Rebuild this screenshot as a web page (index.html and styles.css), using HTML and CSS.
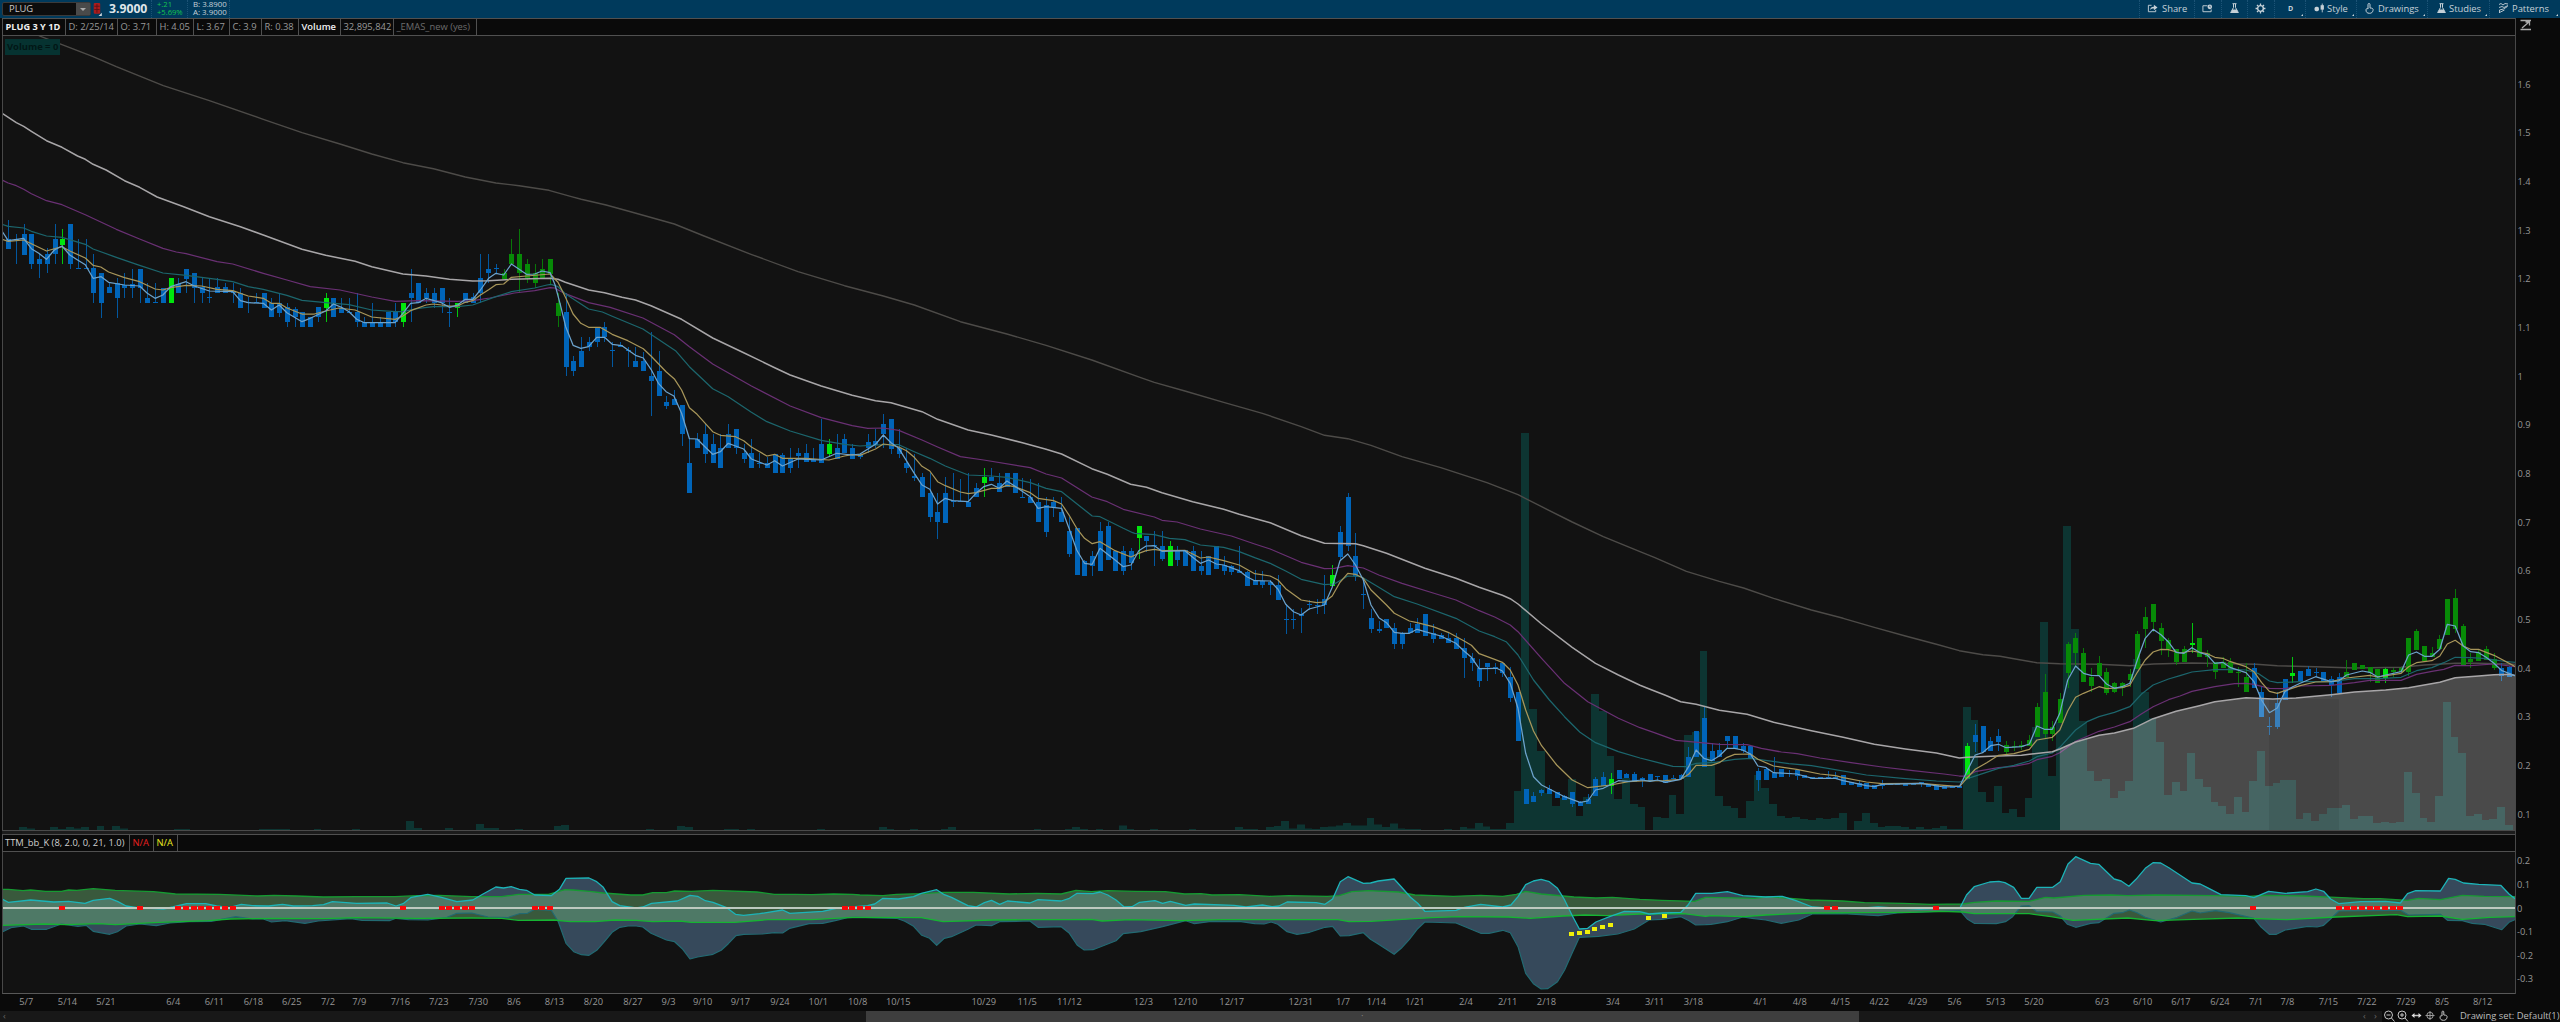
FILE: index.html
```html
<!DOCTYPE html>
<html lang="en">
<head>
<meta charset="utf-8">
<title>PLUG 3 Y 1D</title>
<link rel="stylesheet" href="styles.css">
</head>
<body>
<div class="app">
  <header class="topbar">
    <div class="symbol"><span>PLUG</span><i class="drop"></i></div>
    <svg class="link-icon" viewBox="0 0 8 12"><rect x="0.5" y="0" width="6" height="10" rx="1" fill="#a81c1c"/><path d="M1 3h5M1 6h5M3.5 1v8" stroke="#5a1016" stroke-width=".8"/><path d="M8 9v3H5z" fill="#cfd8de"/></svg>
    <strong class="last">3.9000</strong>
    <div class="pair change"><span>+.21</span><span>+5.69%</span></div>
    <div class="pair quote"><span>B: 3.8900</span><span>A: 3.9000</span></div>
    <nav class="tools">
      <button class="tool share"><svg viewBox="0 0 12 10"><path d="M5 1.5H1.500v7h8V6.500" fill="none" stroke="currentColor"/><path d="M3.500 6.500C3.500 4 5 3 7.500 3V1L11.500 4 7.500 7V5C5.500 5 4.500 5.500 3.500 6.500z" fill="currentColor"/></svg>Share</button>
      <button class="tool snap"><svg viewBox="0 0 12 10"><path d="M6 2H1v6.500h9V6" fill="none" stroke="currentColor"/><circle cx="8.500" cy="3.200" r="2.500" fill="currentColor"/><path d="M8.500 1.900v1.500h1" stroke="#003a5c" stroke-width=".7" fill="none"/></svg></button>
      <button class="tool flask"><svg viewBox="0 0 10 11"><path d="M3 .7h4M4 1v3.500L1.200 9.500h7.600L6 4.500V1" fill="none" stroke="currentColor"/><path d="M3 6.500h4l2 3.500H1z" fill="currentColor"/></svg></button>
      <button class="tool gear"><svg viewBox="0 0 10 10"><circle cx="5" cy="5" r="2.600" fill="none" stroke="currentColor" stroke-width="1.300"/><path d="M5 .5v1.500M5 8v1.500M.5 5H2M8 5h1.500M1.800 1.800l1 1M7.200 7.200l1 1M8.200 1.800l-1 1M2.800 7.200l-1 1" stroke="currentColor" stroke-width="1.200"/></svg></button>
      <button class="tool period more">D</button>
      <button class="tool style more"><svg viewBox="0 0 10 10"><rect x="0.500" y="3.500" width="4" height="4" rx="1.500" fill="currentColor"/><path d="M7.500.5v8" stroke="currentColor" stroke-width=".8"/><rect x="6" y="2" width="3" height="4" fill="currentColor"/></svg>Style</button>
      <button class="tool draw more"><svg viewBox="0 0 10 11"><path d="M3.500 6V1.500a1 1 0 0 1 2 0V5c2.500 0 3.500.8 3 2.500C8 9.500 7 10.300 5 10.300 2.500 10.300 1.500 9 1.500 7c0-1.300 1-2 2-1" fill="none" stroke="currentColor"/></svg>Drawings</button>
      <button class="tool studies more"><svg viewBox="0 0 10 11"><path d="M3 .7h4M4 1v3.500L1.200 9.500h7.600L6 4.500V1" fill="none" stroke="currentColor"/><path d="M3 6.500h4l2 3.500H1z" fill="currentColor"/></svg>Studies</button>
      <button class="tool patterns more"><svg viewBox="0 0 11 11"><path d="M1 1.500l2-1 2 1.500 2-1.500 3 .500M1 4.500l3-1 2 1 4-2M1.500 10V7l4-1 4-2.500M1.500 9.500l5-2.500" fill="none" stroke="currentColor" stroke-width=".9"/></svg>Patterns</button>
    </nav>
  </header>

  <main class="workspace">
    <section class="charts">
      <div class="info">
        <b class="c1">PLUG 3 Y 1D</b><span class="c2">D: 2/25/14</span><span class="c3">O: 3.71</span><span class="c4">H: 4.05</span><span class="c5">L: 3.67</span><span class="c6">C: 3.9</span><span class="c7">R: 0.38</span><em class="c8">Volume</em><span class="c9">32,895,842</span><span class="c10">_EMAS_new (yes)</span>
      </div>
      <div class="plot">
        <svg id="price" viewBox="3 36 2512 794" preserveAspectRatio="none"></svg>
        <span class="badge">Volume = 0</span>
      </div>
      <div class="splitter"></div>
      <div class="info study">
        <span class="name">TTM_bb_K (8, 2.0, 0, 21, 1.0)</span><span class="red">N/A</span><span class="yellow">N/A</span>
      </div>
      <div class="plot lower">
        <svg id="squeeze" viewBox="3 852 2512 141" preserveAspectRatio="none"></svg>
      </div>
    </section>
    <aside class="axis">
      <svg id="scale" viewBox="2516 18 44 976"></svg>
    </aside>
  </main>

  <svg id="dates" class="dates" viewBox="0 994 2560 16"></svg>

  <footer class="bottom">
    <div class="track"><span class="arrow">‹</span><div class="thumb">·</div><span class="arrow">‹</span><span class="arrow">›</span></div>
    <svg class="zoomers" viewBox="0 0 70 12">
      <g fill="none" stroke="#c4c4c4">
        <circle cx="6.500" cy="5" r="4"/><path d="M9.500 8l3 3.500M4.500 5h4"/>
        <circle cx="20" cy="5" r="4"/><path d="M23 8l3 3.500M18 5h4M20 3v4"/>
        <path d="M31 5.500h7" stroke-width="1.500"/><path d="M29.500 5.500l3-2.500v5zM39.500 5.500l-3-2.500v5z" fill="#ddd" stroke="none"/>
        <g stroke="#9a9a9a"><circle cx="48" cy="5.500" r="3.200"/><path d="M48 1v9M43.500 5.500h9"/></g>
        <path d="M60 6V2a.9.900 0 0 1 1.800 0v3c2.500 0 3.700.8 3.200 2.500-.5 2-1.500 2.800-3.500 2.800-2.500 0-3.500-1.300-3.500-3.300 0-1 1-1.500 2-1"/>
      </g>
    </svg>
    <span class="set">Drawing set: Default(1)</span>
  </footer>
</div>
<script src="chart.js"></script>
</body>
</html>
```
FILE: styles.css
```css
* { box-sizing: border-box; }
html, body { margin: 0; height: 100%; background: #0a0a0a; overflow: hidden; }
body { font: 9.400px/1 "Open Sans", "Noto Sans", sans-serif; color: #999; }
.app { display: flex; flex-direction: column; width: 2560px; height: 1022px; }

.topbar { display: flex; height: 18px; background: #003a5c; align-items: stretch; color: #c6d1d8; }
.symbol { display: flex; align-items: center; justify-content: space-between; width: 89px; height: 14px; margin: 2px 2px 0 2px; padding-left: 6px; background: #0d0d0d; border: 1px solid #3a3a3a; border-radius: 2px; color: #c9c9c9; }
.drop { display: grid; place-items: center; width: 14px; height: 12px; background: #4a4a4a; }
.drop::after { content: ""; border: 3px solid transparent; border-top: 3px solid #aaa; border-bottom: 0; }
.link-icon { width: 9px; height: 13px; margin-top: 3px; }
.last { width: 50px; padding-left: 7px; font-size: 12.200px; line-height: 18px; color: #dfe5e9; border-right: 1px dotted #1c5376; }
.pair { display: flex; flex-direction: column; padding-top: 1px; font-size: 7.900px; line-height: 7.500px; border-right: 1px dotted #1c5376; }
.change { width: 36px; padding-left: 5px; color: #14c44e; font-size: 7.600px; }
.quote { width: 42px; padding-left: 5px; }
.tools { display: flex; margin-left: auto; width: 421px; }
.tool { position: relative; display: flex; align-items: center; gap: 4px; margin: 0; padding: 0 0 1px 7px; border: 0; border-left: 1px dotted #1c5376; background: none; font: inherit; color: #c6d1d8; }
.tool svg { width: 11px; height: 11px; flex: none; }
.tool.more::after { content: ""; position: absolute; right: 2px; bottom: 2px; border: 1.500px solid transparent; border-right-color: #cfd8de; border-bottom-color: #cfd8de; }
.share { width: 55px; }
.snap { width: 27px; }
.flask { width: 26px; }
.gear { width: 27px; }
.period { width: 31px; padding-left: 13px; font-size: 7px; font-weight: 700; }
.style { width: 51px; padding-left: 8px; gap: 2px; }
.draw { width: 71px; padding-left: 7px; gap: 3px; }
.studies { width: 62px; padding-left: 8px; gap: 2px; }
.patterns { width: 71px; padding-left: 8px; gap: 3px; }

.workspace { display: flex; height: 976px; }
.charts { display: flex; flex-direction: column; width: 2516px; padding-left: 2px; border-right: 1px solid #484848; }
.info { display: flex; height: 18px; background: #0a0a0a; border: solid #505050; border-width: 1px 0 1px 1px; line-height: 15px; white-space: nowrap; }
.info > * { border-right: 1px solid #505050; padding-left: 2.500px; font-style: normal; }
.info b, .info em { color: #f0f0f0; }
.info b { font-size: 9.200px; }
.c1 { width: 63px; }
.c2 { width: 52px; }
.c3 { width: 39px; }
.c4 { width: 37px; }
.c5 { width: 36px; }
.c6 { width: 32px; }
.c7 { width: 37px; }
.c8 { width: 42px; font-weight: 600; }
.c9 { width: 53px; }
.c10 { width: 83px; color: #6c6c6c; }
.plot { position: relative; height: 794px; border-left: 1px solid #484848; background: #121212; }
.plot svg { display: block; width: 100%; height: 100%; }
.badge { position: absolute; left: 2px; top: 3px; width: 55px; height: 16px; background: #063331; color: #021716; font-weight: 700; line-height: 15px; padding-left: 2px; white-space: nowrap; }
.splitter { height: 4px; background: #1c1c1c; border-top: 1px solid #4a4a4a; }
.study .name { width: 127px; padding-left: 2px; color: #d0d0d0; }
.study .red { width: 24px; color: #e82020; }
.study .yellow { width: 24px; color: #ecec20; }
.lower { height: 142px; border-bottom: 1px solid #585858; }
.axis { width: 44px; background: #0a0a0a; }
.axis svg { display: block; width: 44px; height: 976px; }
svg text { font: 9.300px "Open Sans", "Noto Sans", sans-serif; fill: #969696; }
.dates { display: block; width: 2560px; height: 16px; }

.bottom { display: flex; height: 12px; background: #0a0a0a; align-items: center; }
.track { display: flex; align-items: center; width: 2382px; height: 11px; background: #181818; color: #666; }
.arrow { width: 11px; padding-left: 3px; }
.arrow:first-child { width: 866px; }
.thumb { width: 994px; height: 11px; background: #3e3e3e; text-align: center; color: #888; margin-right: 501px; line-height: 10px; }
.zoomers { width: 70px; height: 12px; }
.set { margin-left: 8px; color: #bcbcbc; white-space: nowrap; }

.volume { fill: #0d3532; }
.cloud { fill: #fff; fill-opacity: .24; }
.line { fill: none; stroke-linejoin: round; stroke-width: 1.250; }
.ema200 { stroke: #4d4b48; stroke-width: 1.400; }
.ema55 { stroke: #a8a6a8; stroke-width: 1.500; }
.ema34 { stroke: #6a3074; }
.ema21 { stroke: #1c666d; }
.ema8 { stroke: #a8965a; }
.ema3 { stroke: #6da3cc; }
.blue { fill: #0064b8; }
.green { fill: #078a07; }
.lime { fill: #00e60d; }
```
FILE: chart.js
```js
const NS = 'http://www.w3.org/2000/svg';
const add = (parent, tag, attrs, text) => {
  const el = document.createElementNS(NS, tag);
  for (const k in attrs) el.setAttribute(k, attrs[k]);
  if (text !== undefined) el.textContent = text;
  parent.appendChild(el);
  return el;
};

// Each bar takes 7.743px; vertical values are thirds of a pixel below the strip's top.
const STEP = 7.743, START = 8.6, BASE = 830;
const barX = n => START + STEP * n;
const strips = {
  a: [0, 30, 2.45], b: [500, 200, 2.45], c: [1000, 350, 2.45], d: [1440, 420, 2.8], e: [1940, 500, 2.529],
  p: [0, 825, 1.8233], q: [850, 825, 1.8233], r: [1700, 825, 1.8233]
};
const points = parts => Object.entries(parts).flatMap(([key, list]) => {
  const [ox, oy, sx] = strips[key];
  return list.trim().split(/\s+/).map(p => {
    const [x, y] = p.split(',').map(Number);
    return [+(ox + x / sx).toFixed(1), +(oy + y / 3).toFixed(1)];
  });
});

// Bars: high,bodyTop,bodyBottom,low,colour (two values: body only, three: no lower wick).
const bars = [
  ['a', 0, `570,627,658 612,628,630,702 582,612,675 612,612,702,718 672,686,702,745 655,672,702,730 582,628,672,702 598,627,644,702,L 582,582,702,718 628,715,718 628,715,718
  672,715,790,820 730,730,820,864 760,772,788 745,758,804,864 730,765,773,804 718,762,773,804 716,716,773,820 760,804,818 760,817,820 775,820 745,745,820,820,L 745,762,788 716,716,746,788 730,730,773,820 745,772,788,820 745,802,805,820
  745,772,788 760,772,788 760,785,788,820 773,788,833 802,815,819,850 788,816,819 788,833 804,818,862 788,820,848,862 818,832,876,892 832,836,862,892 846,892 860,892 830,830,862,876 788,803,833,876,L 803,862 803,833,848 803,845,848 788,846,876,892
  860,876,892 820,876,892 860,876,892 846,892 818,846,876,892 818,818,876,892,L 716,788,804,876 760,818 773,788,804,820 773,788,818,833 773,773,820,850 804,845,848,892 820,820,833,862,L 788,818 788,800,818 672,745,788,820 672,716,730,760 702,714,717,730
  716,730,747,747,G 628,672,702,702,G 598,672,730,788,G 686,702,745,760,G 702,730,760,773,G 686,716,745,745,G 686,686,733,762,G 788,818,857,892,G 788,846,1010,1038 978,992,1022,1038 920,962,1010 920,935,950,962 890,890,935,950 875,892,920,935 935,961,964,1010 935,945,950 950,961,964,1010`],
  ['b', 81, `440,483,500 455,483,513 395,527,544,647 452,512,587 587,605,618,628 570,598,614 614,614,702,738 716,788,880 700,717,745 672,702,762,790 702,732,788 702,745,804 672,702,745 688,688,745,762 732,760,777,790 716,760,804 760,788,791,804 770,790,804 762,820 760,765,820
  745,777,804,818 745,760,768,804 732,760,785 745,780,785 657,732,788 717,732,762,772,L 702,745,777 702,717,760 732,745,777 760,763,770,777 702,727,745,758 688,724,735,745 642,672,702,745 658,658,747,762 688,745,762,773 745,788,804,820 762,827,833,843 820,832,892 820,878,952,966
  878,935,965,1016 832,878,968 820,903,906,920 838,904,907 820,905,922 850,863,892 803,832,850,892,L 803,832,843 818,850,877 820,860 820,880 835,891,894 838,892,908 848,905,967 892,915,995,1010 892,905,922,952 892,935,967 950,993,1062,1072 985,1125 1080,1084,1127 1052,1068,1098,1127
  965,993,1113 965,978,1080 1052,1112 1037,1052,1112,1125 1045,1053,1090,1110`],
  ['c', 146, `528,528,563,628,L 558,558,573,605 542,586,589,647 543,588,627,632 573,588,648,648,L 588,600,630,648 600,648 588,602,663 602,648,663,675 617,675 588,588,657 617,645,663,675 645,648,665,675 588,662,670 663,665,708 660,690,705 662,692,705,713 690,697,705,735 675,705,750
  762,806,809,853 778,806,809,838 775,792,798,848 750,763,766,780 748,764,767,792 675,748,765,792 645,675,708,708,L 528,545,620,632 428,440,588,603 550,617,677,692 685,732,735,778 778,804,838,848 813,837,843,848 807,833 820,835,882,897 845,850,882,897 820,835,848 805,822,850 792,858
  822,850,867,880 850,855,867 850,865,880 850,865,897 865,895,925,983 908,923,940,962 928,955,993,1010 938,938,950,993 938,950,955,973 938,938,970,982 950,982,1043,1055 1026,1173 1318,1363 1325,1337,1355 1318,1320,1328,1337 1305,1317,1333 1325,1343 1335,1338,1350 1325,1325,1363,1370
  1352,1355,1367 1333,1348,1363 1280,1288,1338 1265,1280,1308 1268,1288,1308,1333,L 1260,1288 1270,1273,1283 1265,1272,1297`],
  ['d', 211, `1072,1073,1080,1102 1063,1083 1068,1068,1072,1083 1065,1088 1065,1073,1078 1063,1065,1078 980,1010,1070 933,1010 858,895,1042 970,993,1023 970,990,1010 948,948,962,988 948,988 970,977,992,1000 975,978,1015 1045,1052,1080,1112 1040,1046,1080 1012,1058,1073 1048,1070
  1050,1058,1063,1070 1050,1050,1067,1080 1065,1075 1070,1078 1072,1077 1052,1070,1077 1055,1070,1077 1065,1095 1085,1095 1080,1088,1100 1090,1108 1095,1106 1080,1093,1098,1106 1088,1095 1090,1095 1090,1097 1088,1095 1085,1085,1093,1100 1092,1100 1095,1110 1098,1106 1099,1103 1098,1103`],
  ['e', 253, `730,738,836,836,L 672,705,725,755 678,755 710,722,752 688,707,725,752 722,735,755,768,G 722,738,742,752,G 722,736,740,750,G 705,720,738,738,G 610,622,710,710,G 522,575,702,715,G 663,680,703,722,G 580,598,668,668,G 425,431,520,565,G 400,415,458,500,G 445,458,545,545,G 505,532,557,577,G
  467,490,527,527,G 505,517,578,585,G 545,550,577,578,G 545,550,565,587,G 508,522,540,560,G 393,402,507,507,G 320,350,388,445,G 312,312,365,395,G 370,385,423,465,G 415,420,447,470,G 448,448,487,495,G 437,447,487,487,G 370,430,435,458,L 415,415,470,470,G 450,460,472,500,G 487,487,515,537,G
  470,485,503,503,G 475,487,518,518,G 500,515,518,562,G 490,532,575,575,G 490,503,563 560,577,650 652,679,682,706 577,608,681,688 538,600 472,518,528,548,L 514,543 497,507,528 503,517,520,530 517,545 528,538,556,590 520,530,578 480,517,530,530,G 490,490,510,510,G 495,495,508,508,G 500,500,520,545,G
  507,507,548,548,G 503,507,535,548,L 505,510,515,530,G 500,505,515,515,G 415,415,515,528,G 387,393,450,450,G 437,437,482,482,G 440,460,470,470,G 405,418,447,447,G 298,298,405,405,G 268,293,387,400,G 373,378,497,497,G 460,478,485,503,G 450,455,483,483,G 437,447,480,480,G 460,478,503,510,G 490,503,527,543 497,500,532`]
];

// Volume heights in pixels by bar number, then tall stretches as strip values.
const quiet = {2:3,3:1.500,6:3,7:1,8:3,9:1.500,10:3,12:4,14:4,15:1.500,22:1,23:1,33:1,34:1,35:1,36:1,40:1,45:1,52:9,53:2,57:2,61:6,62:2,63:2,66:1,71:4,72:5,83:1,87:4,88:3,93:1,94:1,96:1,105:1,
  113:3,114:1,117:1,121:1,122:3,133:1,137:1,138:3,139:1,141:1,144:4.500,145:1,148:1,153:1,159:3,160:1,161:1,163:3,164:4,165:9,166:1.500,167:5.500,168:1.500,169:1,170:3,171:3.500,172:4.500,173:7,174:4.500,175:4.500,176:12,177:5.500,178:3,179:6.500,180:1.500,181:1,182:1,
  186:1,188:3,189:1.500,190:7,191:3.500,192:1,193:1,194:7};
const busyD = `1113 39 867 993 1120 1157 1135 1078 1187 1130 821 872 1008 1136 1075 1152 1160 1231 1191 1195 1124 1183 944 935 692 1012 1127 1157 1164 1195 1143 1065 1103 1152 1189 1194 1191 1197 1200 1193 1197 1193 1180 1231 1203 1180 1209 1220 1218 1218 1221 1226 1221 1226 1223 1219 1226 1226`;
const busyE = `622 660 876 907 857 940 927 950 894 680 366 827 667 79 388 663 812 843 838 893 873 843 478 577 655 727 885 845 873 760 838 862 906 917 942 891 937 843 753 858 850 841 841 958 940 962 943 924 925 915 958 948 947 970 965 968 966 817 880 953 965 888 606 712 758 948 943 960 957 922 975`;

const ema200 = {
  a: '95,17 152,44 228,80 285,110 400,167 513,212 645,268 740,308 833,342 911,372 987,398 1062,416 1140,441 1215,459 1272,467 1345,481 1400,500 1424,508',
  b: '260,15 320,35 427,72 500,108 615,163 730,215 844,257 939,288 1015,315 1128,365 1242,402 1338,436 1450,480 1568,532',
  c: '378,97 453,123 548,157 643,190 738,230 795,256 852,266 909,286 985,320 1080,353 1193,398 1269,434 1327,470 1402,516 1478,560 1568,605',
  d: '600,412 690,454 782,484 850,504 934,535 1040,570 1129,595 1216,622 1303,648 1390,673 1454,692 1520,704',
  e: '152,469 187,476 245,488 303,491 402,493 480,497 540,492 637,489 735,491 800,493 853,497 950,500 1048,504 1166,502 1225,495 1303,490 1360,490 1455,493'
};
const ema55Tail = '303,747 343,726 402,706 441,699 489,685 539,656 597,634 656,617 695,605 774,593 842,597 900,594 989,584 1048,576 1127,570 1185,563 1264,547 1303,533 1362,528 1401,524 1440,523 1456,527';
const ema55 = {
  a: '5,250 40,278 58,289 77,304 114,332 152,352 190,378 209,388 228,403 260,420 305,452 342,472 385,501 450,530 513,560 589,590 645,615 740,658 798,676 870,694 911,710 987,732 1044,738 1101,748 1158,753 1197,752 1253,748 1348,745',
  b: '142,238 160,247 217,270 256,278 299,292 332,300 370,317 445,358 521,414 597,458 673,503 711,525 787,558 863,586 920,602 958,608 1034,635 1072,658 1147,690 1204,705 1280,728 1338,748 1376,762 1450,806 1488,823',
  c: '320,403 359,412 397,428 472,455 548,478 586,493 662,518 738,557 795,580 871,581 890,587 947,610 1041,655 1117,685 1174,712 1231,736 1250,746 1269,762 1327,822 1402,892 1459,940 1515,975 1568,1006',
  d: '588,808 631,826 674,845 717,853 782,871 860,883 934,907 1040,932 1129,952 1216,973 1303,987 1390,999 1454,1014',
  e: '69,772 128,769 206,766 226,763 284,755 ' + ema55Tail
};
const ema34 = {
  a: '5,450 20,459 40,467 58,478 77,491 114,512 152,524 209,554 285,598 342,627 399,655 432,666 456,671 532,695 570,702 645,730 703,750 760,770 833,780 911,801 968,814 1025,812 1121,814 1158,812 1200,804 1260,789 1310,782 1348,773 1360,774',
  b: '138,267 160,281 217,308 270,322 350,354 427,404 464,440 521,492 616,558 711,618 787,653 863,677 901,685 939,684 977,691 1034,720 1072,741 1128,770 1185,780 1299,803 1338,822 1376,834 1450,891 1488,905 1527,928',
  c: '378,501 397,511 434,516 491,537 567,558 624,582 662,597 738,637 795,656 819,655 852,647 890,654 928,675 985,700 1061,729 1117,750 1174,782 1212,801 1250,825 1269,845 1327,925 1383,1000 1440,1055 1515,1105 1568,1133',
  d: '600,938 660,961 700,965 782,973 860,974 900,985 956,996 1000,1001 1064,1014 1151,1028 1238,1041 1324,1052 1411,1062 1454,1068',
  e: '50,828 69,828 89,815 148,803 187,799 226,790 245,779 284,769 303,758 343,724 402,694 441,681 480,665 509,642 539,620 578,599 607,588 637,574 695,560 745,551 774,550 794,553 833,565 872,566 911,558 989,556 1048,548 1087,541 1166,541 1205,523 1244,514 1274,508 1303,496 1342,497 1400,492 1455,500'
};
const ema21 = {
  a: '5,583 20,589 58,594 77,604 114,618 152,622 209,643 228,657 285,682 342,706 399,729 456,736 532,748 570,755 608,770 645,778 703,796 740,811 798,818 855,824 911,840 968,845 987,845 1025,835 1062,830 1121,830 1158,825 1215,800 1253,785 1310,774 1340,765',
  b: '125,253 142,260 160,281 217,327 251,336 275,349 350,387 430,452 464,500 521,566 559,590 616,637 654,665 711,693 787,721 844,733 882,738 939,734 977,734 1015,755 1053,775 1091,798 1147,825 1204,828 1242,832 1299,848 1338,865 1376,875 1451,948 1470,950 1527,985 1550,998',
  c: '330,550 378,554 415,565 453,569 491,585 548,592 586,605 624,623 662,640 700,663 738,688 795,704 819,702 852,678 885,680 928,712 966,740 1022,762 1117,805 1174,843 1212,860 1240,875 1269,915 1307,990 1346,1050 1383,1100 1421,1147 1459,1178 1515,1205 1568,1224',
  d: '600,1025 652,1039 687,1040 717,1030 770,1027 825,1018 869,1015 911,1021 977,1031 1040,1037 1086,1045 1194,1065 1303,1076 1390,1083 1454,1086',
  e: '60,842 79,832 148,805 187,796 226,783 245,770 284,759 303,742 343,690 372,665 402,650 441,637 480,620 509,583 539,555 578,537 607,527 637,516 695,509 735,508 774,510 804,520 833,543 853,548 911,545 989,545 1048,536 1107,536 1166,532 1205,512 1244,503 1274,488 1303,472 1342,473 1381,476 1421,483 1455,487'
};
const ema8 = {
  a: '5,628 20,634 58,630 77,641 114,663 152,650 171,663 209,684 228,706 247,711 266,726 305,743 342,755 380,777 399,780 418,773 456,766 494,768 532,778 570,782 608,798 645,805 665,820 684,820 703,834 740,852 770,852 798,843 830,834 870,840 911,861 968,868 987,858 1006,842 1044,825 1062,822 1101,828 1121,828 1140,817 1158,812 1177,795 1197,779 1215,764 1234,762 1253,742 1290,738 1348,732 1367,757 1386,803 1404,852 1423,880 1442,892 1470,892',
  b: '256,389 275,403 313,422 351,446 370,468 407,515 428,538 445,570 464,623 483,643 521,695 540,706 577,710 597,722 616,741 654,768 673,763 692,775 749,775 806,780 844,768 863,764 882,766 920,747 939,732 958,735 977,741 996,752 1015,772 1034,799 1053,813 1072,845 1091,857 1128,876 1147,881 1166,878 1204,865 1223,865 1242,856 1261,860 1299,878 1318,895 1356,902 1376,912 1394,945 1413,985 1432,1015 1451,1031 1470,1025 1507,1052 1546,1071',
  c: '340,610 358,602 378,598 397,602 453,601 472,612 491,624 511,621 548,632 586,645 624,671 662,678 681,690 700,716 738,750 776,758 795,756 814,738 833,697 852,670 871,673 890,685 909,720 947,765 966,790 1003,813 1022,818 1061,830 1098,847 1136,872 1155,886 1174,911 1212,928 1231,937 1250,960 1269,1005 1288,1080 1307,1143 1327,1187 1364,1245 1402,1290 1440,1313 1496,1305 1540,1295',
  d: '566,1083 630,1082 674,1078 696,1063 717,1036 760,1036 782,1028 804,1012 825,1003 869,1002 890,1018 934,1038 999,1048 1064,1062 1107,1067 1129,1073 1194,1086 1238,1091 1346,1090 1411,1096 1440,1098',
  e: '50,859 69,833 89,808 118,788 148,766 187,761 226,748 245,720 284,712 303,690 323,633 343,592 363,580 402,560 421,566 460,563 480,556 499,517 519,480 539,456 559,448 578,449 607,459 637,453 676,461 695,472 715,475 735,485 774,500 794,515 813,547 833,574 853,580 872,572 911,557 950,546 989,545 1028,534 1087,526 1107,531 1166,520 1185,500 1205,488 1244,482 1264,468 1283,432 1303,421 1323,438 1342,448 1362,448 1401,466 1455,500'
};
const ema3 = {
  a: '5,603 20,632 58,625 77,656 95,670 114,688 133,660 152,648 171,675 190,690 209,704 228,745 248,740 266,757 305,765 342,768 361,790 380,805 399,795 418,770 456,755 476,768 513,783 570,785 589,812 608,818 645,820 665,840 684,825 703,848 740,875 760,865 798,843 817,822 837,832 855,845 874,868 893,878 968,878 987,850 1006,820 1025,818 1044,805 1081,818 1101,832 1121,825 1140,808 1158,808 1177,780 1197,745 1215,730 1234,735 1253,702 1290,733 1310,732 1328,723 1348,728 1360,765 1372,820 1386,890 1404,946 1423,955 1442,950 1462,922',
  b: '256,412 275,433 299,437 332,466 351,474 370,508 388,550 407,575 426,588 445,640 464,716 483,717 502,740 521,763 540,755 559,730 577,738 597,747 616,777 654,795 673,782 692,798 730,777 749,778 787,780 825,760 863,765 882,762 920,733 939,705 958,728 977,745 1015,820 1034,855 1053,868 1072,912 1091,895 1109,902 1147,905 1166,880 1185,860 1204,853 1223,865 1242,843 1261,858 1299,890 1318,925 1338,920 1376,925 1394,985 1413,1050 1432,1090 1451,1093 1470,1045 1488,1062 1507,1080 1527,1100 1546,1095',
  c: '340,602 358,588 378,587 397,604 453,602 472,622 491,640 511,630 530,642 548,645 586,662 605,680 624,692 662,693 681,718 700,763 719,785 738,795 757,777 795,765 814,712 833,632 852,612 871,645 890,690 909,765 928,803 947,818 966,847 985,850 1003,850 1022,838 1041,845 1080,858 1117,880 1136,902 1155,922 1174,956 1217,955 1231,963 1250,1000 1269,1075 1288,1210 1307,1280 1327,1305 1383,1340 1421,1357 1440,1353 1459,1320 1478,1315 1515,1292 1540,1294',
  d: '566,1080 588,1084 609,1080 631,1087 674,1078 696,1040 717,990 739,1015 760,1022 782,1008 804,985 825,985 847,990 869,1002 890,1038 911,1042 934,1058 999,1062 1043,1075 1107,1075 1129,1082 1194,1097 1216,1100 1238,1093 1346,1090 1411,1101 1440,1100',
  e: '50,858 69,812 89,765 108,758 128,737 148,733 167,743 206,740 226,732 245,678 264,688 284,688 303,640 323,540 343,498 363,520 382,526 402,527 421,552 441,565 460,560 480,550 499,480 519,415 539,388 559,404 577,425 597,457 617,460 637,443 656,457 676,465 695,490 715,487 735,503 774,518 794,545 813,600 833,638 853,624 872,575 892,560 911,550 950,530 989,545 1008,543 1028,525 1068,513 1087,517 1107,531 1127,525 1166,515 1185,465 1205,456 1225,469 1244,469 1264,448 1283,373 1303,378 1323,437 1342,455 1362,458 1381,472 1401,490 1421,512 1455,527'
};

const price = document.getElementById('price');

// Volume histogram
const volume = (n, top) => {
  const left = barX(n) - STEP / 2 - 0.9, x = Math.round(left), x2 = Math.round(left + STEP);
  if (top < BASE) add(price, 'rect', {class: 'volume', x, y: top, width: x2 - x, height: BASE - top});
};
for (const n in quiet) volume(+n, BASE - quiet[n]);
busyD.split(' ').forEach((v, i) => volume(195 + i, Math.round(420 + v / 3)));
busyE.split(' ').forEach((v, i) => volume(253 + i, Math.round(500 + v / 3)));

const line = (svg, cls, parts) => add(svg, 'polyline', {class: 'line ' + cls, points: points(parts).join(' ')});
line(price, 'ema200', ema200);

// Candles
const tint = {L: 'lime', G: 'green'};
for (const [key, first, rows] of bars) {
  const oy = strips[key][1];
  rows.trim().split(/\s+/).forEach((row, i) => {
    const f = row.split(',');
    let v = f.filter(s => !isNaN(s)).map(Number);
    if (v.length === 2) v = [v[0], v[0], v[1], v[1]];
    if (v.length === 3) v.push(v[2]);
    const [h, t, b, l] = v.map(s => Math.round(oy + s / 3));
    const cls = tint[f[4]] || 'blue', x = Math.round(barX(first + i) - 0.5);
    add(price, 'rect', {class: cls, x, y: h, width: 1, height: Math.max(l - h, 1), opacity: .85});
    add(price, 'rect', {class: cls, x: x - 2, y: t, width: 5, height: Math.max(b - t, 1)});
  });
}

line(price, 'ema34', ema34);
line(price, 'ema21', ema21);
const cloudEdge = points({e: ema55Tail});
add(price, 'polygon', {class: 'cloud', points: cloudEdge.join(' ') + ` 2515,${BASE} 2060,${BASE}`});
add(price, 'rect', {x: 2269, y: 699, width: 70, height: 131, fill: '#000', opacity: .08});
line(price, 'ema55', ema55);
line(price, 'ema8', ema8);
line(price, 'ema3', ema3);

// Squeeze study
const upperK = {
  p: '5,193 15,193 42,197 56,195 83,199 112,199 125,195 140,196 170,191 210,196 280,200 320,207 400,208 470,213 500,211 540,213 590,216 650,215 720,215 760,212 800,211 860,215 915,215 945,208 1000,208 1030,194 1045,195 1075,199 1100,204 1150,210 1172,210 1190,203 1215,203 1230,198 1260,199 1300,196 1380,201 1412,208 1450,208 1480,209 1520,207 1555,208',
  q: '18,210 60,212 85,208 130,206 170,202 225,202 290,207 340,205 385,207 412,196 440,200 470,197 520,199 575,200 610,207 640,206 660,210 710,209 765,214 800,212 870,214 892,212 915,200 945,197 1000,201 1030,210 1100,214 1150,211 1190,214 1215,208 1232,199 1260,207 1320,216 1360,219 1390,217 1440,223 1480,226 1540,229 1560,217',
  r: '15,217 100,220 125,215 200,225 260,228 300,233 370,235 420,238 480,237 500,232 540,228 600,229 630,217 645,219 700,211 750,210 780,212 830,210 940,212 1000,214 1030,211 1100,213 1160,217 1210,221 1240,221 1290,226 1310,220 1350,224 1390,211 1430,214 1486,215'
};
const lowerK = {
  p: '5,301 80,297 120,299 180,296 210,299 290,292 380,287 420,282 500,280 590,281 650,278 760,280 860,279 915,280 945,286 1010,285 1040,290 1085,290 1120,285 1160,286 1190,290 1240,288 1260,292 1340,292 1400,284 1480,284 1555,277',
  q: '20,277 130,278 170,290 260,285 320,284 400,284 440,283 460,288 510,284 600,287 680,284 770,284 890,284 910,290 950,289 1000,284 1060,278 1110,275 1200,276 1240,280 1300,273 1340,270 1380,272 1440,267 1520,266 1560,274',
  r: '20,272 80,275 120,270 200,264 300,263 380,262 440,259 480,261 500,266 600,266 640,275 680,286 780,279 830,287 900,283 980,279 1070,284 1160,276 1270,269 1290,275 1350,273 1390,283 1440,277 1486,275'
};
const upperB = {
  p: '5,223 15,232 56,225 98,231 125,229 155,235 170,226 200,220 215,230 230,243 250,248 275,250 298,252 315,246 340,236 375,236 395,243 418,248 440,238 460,242 490,243 515,238 535,243 570,242 590,239 606,230 650,235 706,234 722,243 735,236 750,217 780,208 805,217 833,230 862,225 880,208 904,186 918,189 932,185 947,193 960,196 975,210 1005,212 1020,193 1032,160 1074,159 1088,170 1100,187 1116,230 1130,242 1160,249 1172,246 1188,235 1235,228 1258,211 1272,214 1286,227 1300,232 1325,248 1341,268 1356,271 1385,266 1427,255 1440,265 1500,259 1525,250 1560,245',
  q: '32,242 45,237 60,220 88,222 116,215 130,205 158,194 172,209 185,217 215,242 230,246 245,233 258,226 273,238 287,228 328,234 343,224 385,228 400,220 414,205 443,206 456,201 470,210 485,225 500,246 514,245 528,232 556,227 570,235 584,229 612,241 628,237 700,241 722,246 752,240 770,245 782,243 797,231 850,233 866,238 880,222 894,170 908,155 936,175 949,174 963,168 992,162 1005,185 1022,217 1035,235 1048,259 1105,256 1120,247 1150,238 1190,246 1205,240 1218,215 1232,179 1246,168 1260,163 1275,170 1290,190 1302,222 1317,272 1330,312 1345,310 1360,291 1385,275 1412,259 1440,260 1457,267 1480,264 1515,262 1528,240 1542,205 1560,205',
  r: '22,205 50,200 78,212 120,216 150,214 175,227 205,246 230,249 300,249 325,246 345,248 400,252 474,248 486,210 500,185 528,171 545,169 556,173 572,187 586,220 600,220 614,187 643,187 657,170 671,117 685,95 712,115 727,118 755,162 768,168 782,184 795,163 812,130 826,113 840,114 855,128 897,174 912,177 925,188 950,209 995,212 1010,218 1037,199 1067,205 1108,200 1123,192 1137,199 1150,222 1165,236 1205,230 1250,229 1277,234 1290,206 1305,197 1350,198 1365,160 1377,163 1392,174 1420,178 1460,181 1475,207 1486,221'
};
const lowerB = {
  p: '5,320 20,308 43,303 57,313 85,313 112,297 142,304 157,301 170,319 200,328 214,320 230,303 255,297 285,302 310,294 345,290 385,289 430,275 460,282 480,282 495,291 520,287 556,295 580,288 620,283 640,281 660,286 710,287 722,280 745,284 780,285 815,277 833,265 860,264 890,276 925,278 947,266 962,265 975,253 1005,256 1018,290 1032,355 1046,380 1060,389 1074,391 1088,376 1102,350 1116,322 1130,307 1145,303 1160,303 1172,306 1187,325 1215,345 1230,350 1245,373 1258,402 1272,396 1300,388 1315,376 1328,356 1342,332 1356,328 1390,327 1412,323 1427,324 1440,310 1475,296 1500,295 1525,286 1545,278 1560,277',
  q: '85,280 100,289 116,304 131,331 145,340 158,361 172,340 185,335 215,313 230,300 258,302 273,290 328,288 343,307 385,305 400,325 414,360 427,375 443,374 485,347 498,326 530,320 570,305 612,287 628,296 655,290 710,289 738,296 755,297 768,291 780,298 797,320 815,328 838,322 866,307 880,304 894,333 910,332 936,323 949,343 963,357 992,388 1005,370 1020,343 1034,313 1048,291 1105,294 1150,325 1165,325 1190,316 1204,323 1218,365 1232,445 1246,476 1260,492 1272,491 1290,470 1303,435 1317,383 1330,337 1365,334 1400,327 1430,312 1457,285 1480,283 1515,275 1530,287 1542,300 1560,299',
  r: '20,298 50,290 78,276 95,280 120,285 148,295 180,285 205,267 260,266 325,272 360,264 474,257 488,283 500,295 540,296 557,290 570,275 586,243 600,242 614,260 643,261 657,273 670,298 685,307 712,295 727,293 755,265 770,263 783,255 797,263 812,277 840,291 870,277 897,258 912,264 940,257 965,263 1010,280 1023,306 1038,328 1051,328 1067,315 1108,304 1125,306 1137,301 1151,280 1165,258 1277,256 1292,270 1350,268 1363,286 1390,287 1408,295 1430,298 1462,314 1475,292 1486,284'
};
const squeeze = document.getElementById('squeeze');
const band = (top, bottom, fill, opacity) =>
  add(squeeze, 'polygon', {points: [...points(top), ...points(bottom).reverse()].join(' '), fill, 'fill-opacity': opacity});
band(upperB, lowerB, '#6e9ecb', .4);
band(upperK, lowerK, '#70bc78', .42);
const trace = (parts, stroke, w) => add(squeeze, 'polyline', {class: 'line', points: points(parts).join(' '), style: `stroke:${stroke};stroke-width:${w}`});
trace(lowerB, '#226a72', 1.2);
trace(upperK, '#169a32', 1.3);
trace(lowerK, '#16b432', 1.3);
trace(upperB, '#1cb4b8', 1.3);
add(squeeze, 'rect', {x: 3, y: 907, width: 2512, height: 2, fill: '#bcc9bf'});

const dots = {
  p: '113 255 325 339 353 367 381 396 410 424 735 805 819 834 847 861 975 989 1003 1540 1554',
  q: '4 18 32',
  r: '232 246 431 1009 1165 1179 1193 1207 1221 1235 1249 1263 1277'
};
for (const k in dots) for (const x of dots[k].split(' '))
  add(squeeze, 'rect', {x: Math.round(strips[k][0] + x / 1.8233) - 3, y: 906, width: 6, height: 4, fill: '#f80a0a'});
for (const [x, y] of points({q: '1317,328 1331,325 1345,321 1359,313 1373,307 1387,300 1457,279 1485,274'}))
  add(squeeze, 'rect', {x: Math.round(x) - 3, y: Math.round(y) - 2, width: 5, height: 4, fill: '#f0f00a'});

// Scales
const scale = document.getElementById('scale');
for (let i = 1; i <= 16; i++)
  add(scale, 'text', {x: 2517.5, y: (863 - 48.67 * i + 3.2).toFixed(1)}, String(i / 10));
for (let i = 2; i >= -3; i--)
  add(scale, 'text', {x: 2517, y: (908.3 - 23.57 * i + 3.2).toFixed(1)}, String(i / 10));
add(scale, 'path', {d: 'M2520.500 20.500H2531M2520.500 29.500H2531M2522 28l7-6M2525.500 22h4v3.500', fill: 'none', stroke: '#aaa', 'stroke-width': 1.3});

const dates = document.getElementById('dates');
const ticks = {
  p: '5/7@48 5/14@123 5/21@193 6/4@316 6/11@391 6/18@462 6/25@532 7/2@598 7/9@655 7/16@730 7/23@800 7/30@872 8/6@937 8/13@1011 8/20@1082 8/27@1154 9/3@1219 9/10@1281 9/17@1350 9/24@1422 10/1@1492',
  q: '10/8@14 10/15@88 10/29@244 11/5@323 11/12@400 12/3@535 12/10@611 12/17@696 12/31@822 1/7@899 1/14@960 1/21@1030 2/4@1123 2/11@1199 2/18@1270 3/4@1391 3/11@1467 3/18@1538',
  r: '4/1@110 4/8@182 4/15@256 4/22@327 4/29@397 5/6@464 5/13@539 5/20@609 6/3@733 6/10@807 6/17@877 6/24@948 7/1@1014 7/8@1071 7/15@1146 7/22@1216 7/29@1287 8/5@1353 8/12@1427'
};
for (const k in ticks) for (const t of ticks[k].split(' ')) {
  const [label, x] = t.split('@');
  add(dates, 'text', {x: (strips[k][0] + x / 1.8233).toFixed(1), y: 1005, 'text-anchor': 'middle'}, label);
}
```
